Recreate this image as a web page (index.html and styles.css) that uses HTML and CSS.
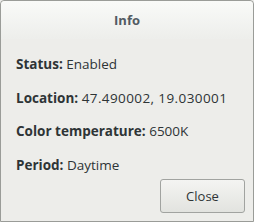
FILE: index.html
```html
<!DOCTYPE html>
<html lang="en">

<head>
    <meta charset="UTF-8">
    <meta name="viewport" content="width=device-width, initial-scale=1.0">
    <title>Info</title>
    <link rel="stylesheet" href="styles.css">
</head>

<body>
    <div class="dialog">
        <div class="header">
            <h1>Info</h1>
        </div>
        <div class="content">
            <p class="row"><b>Status:</b> Enabled</p>
            <p class="row"><b>Location:</b> <span class="num">47.490002, 19.030001</span></p>
            <p class="row"><b>Color temperature:</b> 6500K</p>
            <p class="row"><b>Period:</b> Daytime</p>
        </div>
        <div class="actions">
            <button class="close-button">Close</button>
        </div>
    </div>
</body>

</html>
```

FILE: styles.css
```css
* {
    margin: 0;
    padding: 0;
    box-sizing: border-box;
}

body {
    width: 254px;
    height: 222px;
    font-family: "Open Sans", "Noto Sans", sans-serif;
    font-size: 13px;
    color: #2e3436;
    background: #ededea;
}

.dialog {
    width: 254px;
    height: 222px;
    border: 1px solid #9a9c98;
    border-radius: 4px 4px 0 0;
    background: #ededea;
    display: flex;
    flex-direction: column;
}

.header {
    height: 38px;
    background: linear-gradient(#f9faf8, #edeeeb);
    border-radius: 4px 4px 0 0;
    display: flex;
    align-items: center;
    justify-content: center;
}

h1 {
    font-size: 13px;
    font-weight: bold;
    color: #525b63;
}

.content {
    padding: 16px 15px 0;
    display: flex;
    flex-direction: column;
    gap: 15.5px;
}

.row {
    font-size: 13.5px;
    line-height: 18px;
}

.row b {
    color: #2e3436;
}

.row .num {
    letter-spacing: 0.4px;
}

.actions {
    margin-top: auto;
    display: flex;
    justify-content: flex-end;
    padding: 0 8px 8px 0;
}

.close-button {
    width: 85px;
    height: 34px;
    font-family: inherit;
    font-size: 13px;
    color: #2e3436;
    border: 1px solid #a1a3a0;
    border-radius: 3px;
    background: linear-gradient(#f4f4f2, #e2e3df);
}
```
